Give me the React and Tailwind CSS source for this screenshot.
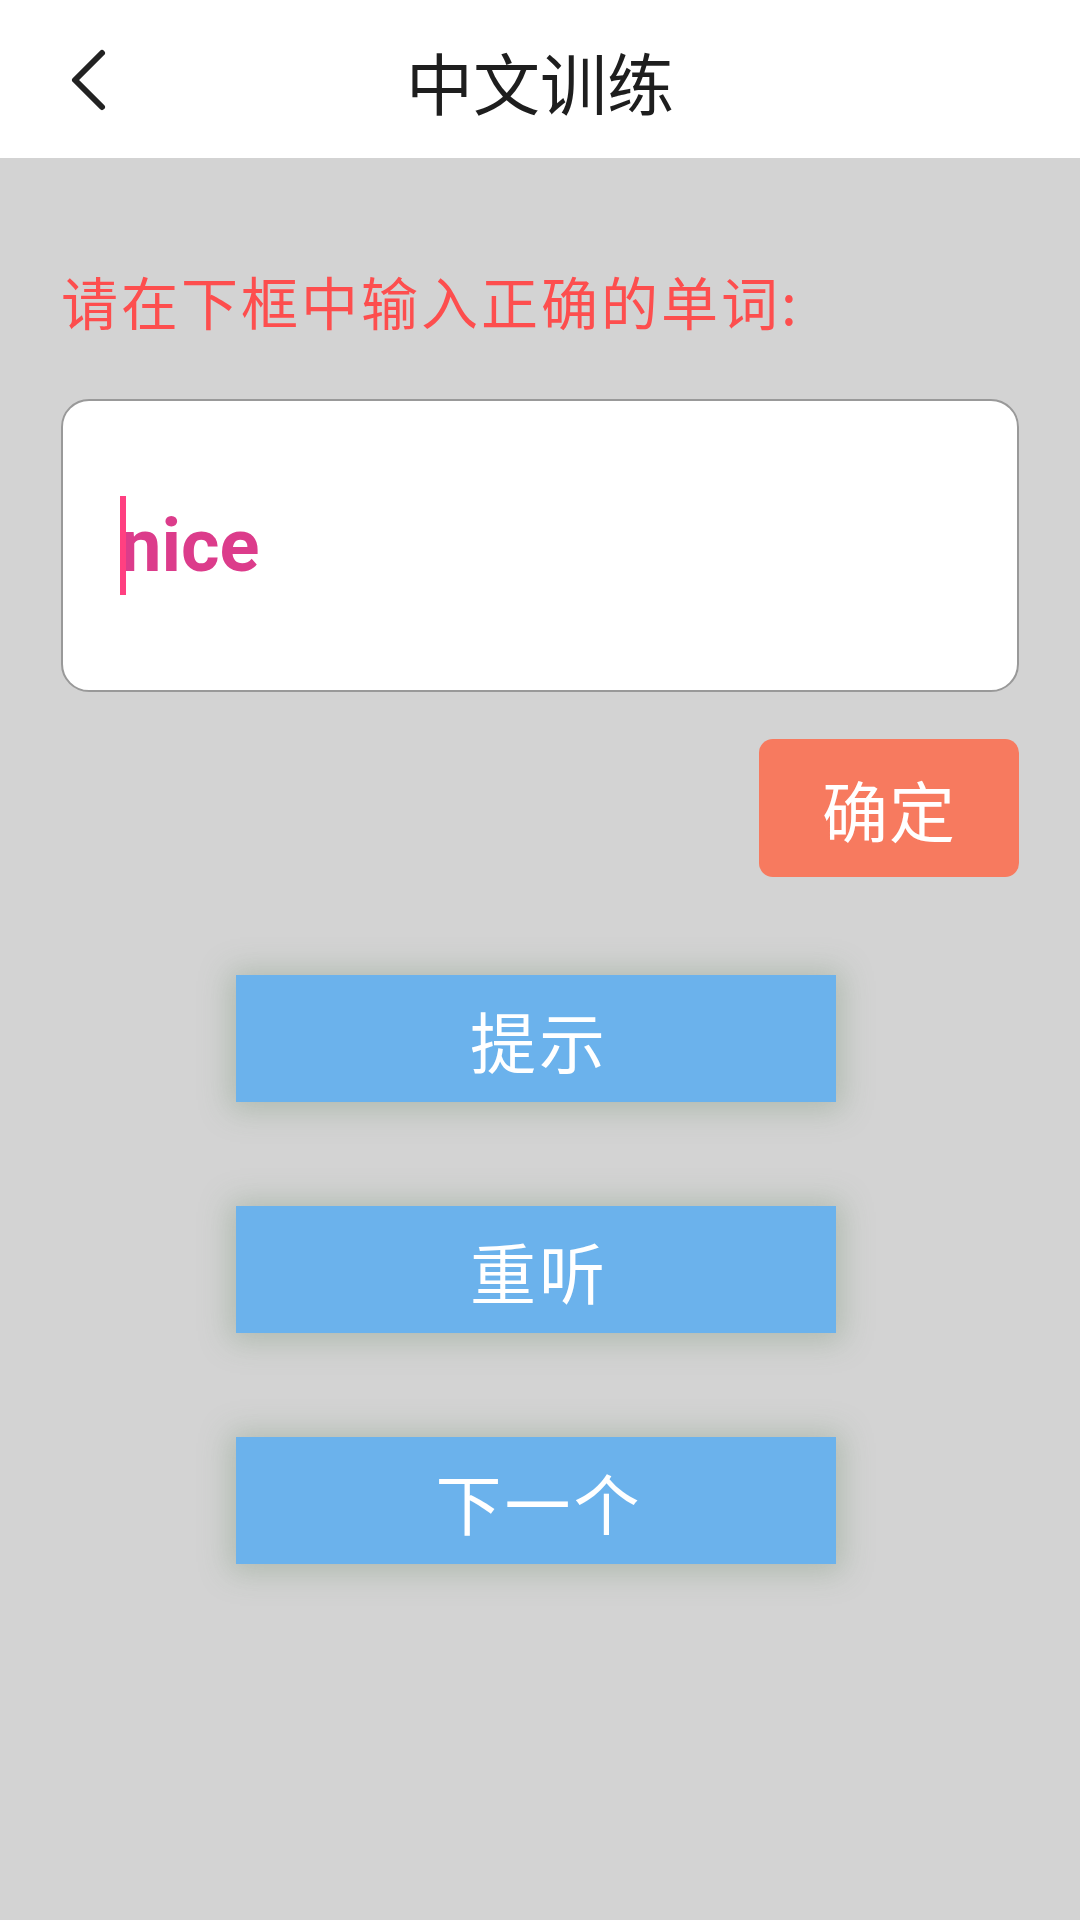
import React, { useState } from 'react';

const BackIcon = () => (
  <svg width="48" height="70" viewBox="0 0 48 70" fill="none">
    <polyline
      points="36,8 9,35 36,62"
      stroke="#222222"
      strokeWidth="6"
      strokeLinecap="round"
      strokeLinejoin="round"
    />
  </svg>
);

const ActionButton = ({ label, onClick }) => (
  <button
    onClick={onClick}
    className="w-[600px] h-[127px] ml-[175px] pl-[6px] bg-[#6bb2ec] text-white text-[66px] leading-none tracking-[3px] shadow-[0_2px_28px_6px_rgba(110,140,110,0.35)]"
  >
    {label}
  </button>
);

const App = () => {
  const [word, setWord] = useState('nice');

  return (
    <div className="w-[1080px] min-h-[1920px] bg-[#d3d3d3] font-['Noto_Sans_CJK_SC',sans-serif]">
      <header className="h-[158px] bg-white grid grid-cols-[1fr_auto_1fr] items-center">
        <div className="pl-[66px] pt-[2px]">
          <BackIcon />
        </div>
        <h1 className="text-[67px] leading-none text-[#1e1e1e] mt-[2px]">中文训练</h1>
        <div />
      </header>

      <main className="px-[61px] pt-[114px] flex flex-col">
        <p className="text-[57px] leading-none tracking-[3px] text-[#fd4e4e]">请在下框中输入正确的单词:</p>

        <div className="mt-[70px] h-[293px] bg-white border-2 border-[#999999] rounded-[28px] flex items-center pl-[57px]">
          <span className="w-[6px] h-[99px] bg-[#ff4081] mr-[-6px] relative" />
          <span className="font-['Roboto',sans-serif] font-bold text-[74px] leading-none text-[#dc3c8b]">
            {word}
          </span>
        </div>

        <div className="mt-[47px] flex justify-end">
          <button
            onClick={() => setWord(word)}
            className="w-[260px] h-[138px] rounded-[14px] bg-[#f77a5f] text-white text-[66px] leading-none tracking-[1px]"
          >
            确定
          </button>
        </div>

        <div className="mt-[98px] flex flex-col gap-[104px]">
          <ActionButton label="提示" />
          <ActionButton label="重听" />
          <ActionButton label="下一个" />
        </div>
      </main>
    </div>
  );
};

export default App;
